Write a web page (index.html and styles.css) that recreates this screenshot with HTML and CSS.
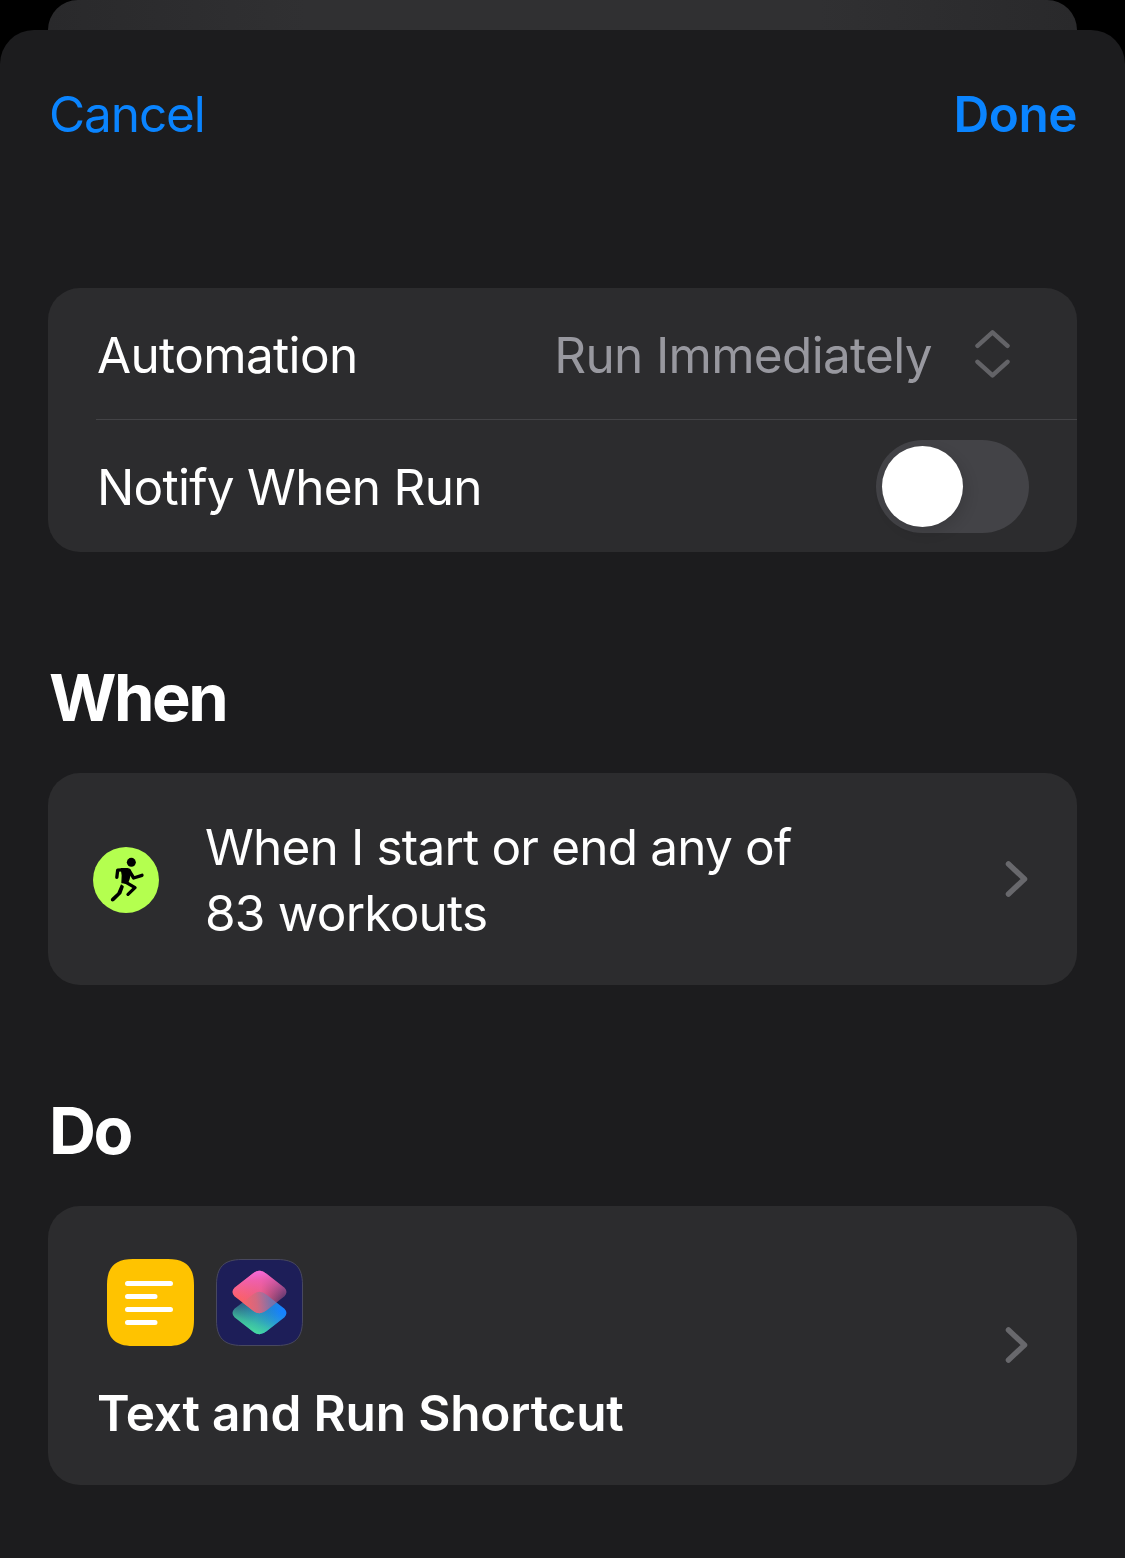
FILE: index.html
```html
<!DOCTYPE html>
<html lang="en">
<head>
<meta charset="utf-8">
<title>Automation</title>
<link rel="stylesheet" href="styles.css">
</head>
<body>
<div class="backdrop-sheet"></div>
<main class="sheet">
  <header class="toolbar">
    <a class="cancel">Cancel</a>
    <a class="done">Done</a>
  </header>

  <section class="card settings">
    <div class="row">
      <span class="label automation">Automation</span>
      <span class="value">Run Immediately</span>
      <svg class="updown" width="36" height="50" viewBox="0 0 36 50"><path d="M2.500 16.800 17.500 3.300 32.500 16.800M2.500 32.800 17.500 46.300 32.500 32.800"/></svg>
    </div>
    <div class="row divided">
      <span class="label notify">Notify When Run</span>
      <span class="switch"><span class="knob"></span></span>
    </div>
  </section>

  <h2 class="when">When</h2>
  <section class="card trigger">
    <svg class="workout" width="66" height="66" viewBox="39 36 198 198">
      <circle cx="138" cy="135" r="99" fill="#b4ff4f"/>
      <circle cx="154" cy="82" r="13.5"/>
      <path d="M124 101 142 101Q154 102 151 113L147 132 142 145 126 143 127 121Z" stroke="#000" stroke-width="4" stroke-linejoin="round"/>
      <path class="limb" d="M126 104.500 113 105.500 110.500 127M148 108 161 129 186 121M133 139 165 158 144 178"/>
      <path d="M123 148 131 153Q132 156 130 160L124 176 102 198Q97 201 93 197 91 193 95 189L112 173Z"/>
    </svg>
    <p class="description"><span class="line1">When I start or end any of</span><br><span class="line2">83 workouts</span></p>
    <svg class="chevron" width="24" height="38" viewBox="0 0 24 38"><path d="M3.500 4 19.500 19 3.500 34"/></svg>
  </section>

  <h2 class="do">Do</h2>
  <section class="card action">
    <div class="action-body">
      <div class="icons">
        <svg width="87" height="87" viewBox="0 0 87 87">
          <path fill="#ffc300" d="M0 26C0 8 8 0 26 0H61C79 0 87 8 87 26V61C87 79 79 87 61 87H26C8 87 0 79 0 61Z"/>
          <path d="M20.500 24.500H63.500M20.500 37.500H48M20.500 50.500H63.500M20.500 63.500H48" stroke="#fff" stroke-width="5" stroke-linecap="round"/>
        </svg>
        <svg width="87" height="87" viewBox="0 0 87 87">
          <defs>
            <linearGradient id="low" x1=".12" y1=".3" x2=".88" y2=".55">
              <stop offset="0" stop-color="#2c4a73"/><stop offset=".5" stop-color="#2687bd"/><stop offset="1" stop-color="#1682ff"/>
            </linearGradient>
            <linearGradient id="green" x1=".35" y1="1" x2=".65" y2=".35">
              <stop offset="0" stop-color="#4ce39a"/><stop offset=".35" stop-color="#42cfa0" stop-opacity=".75"/><stop offset="1" stop-color="#3399b5" stop-opacity="0"/>
            </linearGradient>
            <linearGradient id="top" x1=".1" y1=".5" x2=".95" y2=".5">
              <stop offset="0" stop-color="#ff6259"/><stop offset=".5" stop-color="#e95c80"/><stop offset="1" stop-color="#56366b"/>
            </linearGradient>
            <linearGradient id="pink" x1=".42" y1="0" x2=".5" y2=".75">
              <stop offset="0" stop-color="#f66be0"/><stop offset=".3" stop-color="#f060bd" stop-opacity=".75"/><stop offset="1" stop-color="#f060a0" stop-opacity="0"/>
            </linearGradient>
            <linearGradient id="overlap" x1="0" y1=".35" x2=".9" y2=".25">
              <stop offset=".2" stop-color="#f9646a"/><stop offset=".5" stop-color="#cf6a80"/><stop offset=".8" stop-color="#727ab5"/>
            </linearGradient>
            <path id="tile" d="M36.500 2.700 18.500 16.700Q14.600 21 18.500 25.300L36.500 39.300Q43.500 45.100 50.500 39.300L68.500 25.300Q72.400 21 68.500 16.700L50.500 2.700Q43.500-3.100 36.500 2.700Z"/>
            <clipPath id="upper"><use href="#tile" y="12"/></clipPath>
          </defs>
          <path fill="#1d1e58" stroke="#48485f" d="M.5 26C.5 8 8 .5 26 .5H61C79 .5 86.500 8 86.500 26V61C86.500 79 79 86.500 61 86.500H26C8 86.500 .5 79 .5 61Z"/>
          <use href="#tile" y="33" fill="url(#low)"/><use href="#tile" y="33" fill="url(#green)"/>
          <use href="#tile" y="12" fill="url(#top)"/><use href="#tile" y="12" fill="url(#pink)"/>
          <g clip-path="url(#upper)"><use href="#tile" y="33" fill="url(#overlap)" opacity=".85"/></g>
        </svg>
      </div>
      <span class="action-title">Text and Run Shortcut</span>
    </div>
    <svg class="chevron" width="24" height="38" viewBox="0 0 24 38"><path d="M3.500 4 19.500 19 3.500 34"/></svg>
  </section>
</main>
</body>
</html>
```
FILE: styles.css
```css
* { box-sizing: border-box; }

body {
  margin: 0;
  height: 1558px;
  overflow: hidden;
  background: #000;
  color: #fff;
  font: 400 49.5px/66px Inter, "Liberation Sans", sans-serif;
}

.backdrop-sheet {
  height: 30px;
  margin: 0 48px;
  border-radius: 30px 30px 0 0;
  background: linear-gradient(90deg, #29292b, #303032 25%, #303032 75%, #29292b);
}

.sheet {
  height: 1528px;
  padding: 0 48px;
  border-radius: 34px 34px 0 0;
  background: #1c1c1e;
}

.toolbar {
  display: flex;
  align-items: center;
  justify-content: space-between;
  height: 168px;
  margin-bottom: 90px;
  color: #0a84ff;
}

.cancel { padding-left: 1px; letter-spacing: -1.1px; }
.done { font-weight: 600; letter-spacing: -.5px; }

.card {
  display: flex;
  border-radius: 32px;
  background: #2c2c2e;
}

.settings { flex-direction: column; height: 264px; padding-left: 48px; }

.row {
  display: flex;
  align-items: center;
  height: 132px;
  padding-right: 48px;
}

.row:first-child { height: 131px; }
.row.divided { height: 133px; border-top: 1px solid #434346; }
.label, .value { padding-top: 2px; }
.label { margin-right: auto; padding-left: 1px; letter-spacing: -.65px; }
.notify { letter-spacing: -.73px; }
.value { color: #98989f; letter-spacing: -.68px; }

.updown { margin: 0 18px 0 43px; }

.updown path {
  fill: none;
  stroke: #636367;
  stroke-width: 4.500;
  stroke-linecap: round;
  stroke-linejoin: round;
}

.switch {
  width: 153px;
  height: 93px;
  padding: 6px;
  border-radius: 47px;
  background: #434347;
}

.knob {
  display: block;
  width: 81px;
  height: 81px;
  border-radius: 50%;
  background: #fff;
  box-shadow: 4px 5px 14px rgba(0, 0, 0, .12);
}

h2 {
  margin: 0;
  font-size: 65px;
  font-weight: 700;
  line-height: 80px;
  letter-spacing: -2.5px;
}

.when, .do { padding: 106px 0 35px 1px; }

.trigger { align-items: center; height: 212px; padding: 0 48px 0 45px; }
.workout { margin-top: 2px; }
.description { flex: 1; margin: 2px 0 0 46px; }
.line1 { letter-spacing: -.82px; }
.line2 { letter-spacing: -.75px; }

.limb {
  fill: none;
  stroke: #000;
  stroke-width: 10;
  stroke-linecap: round;
  stroke-linejoin: round;
}

.chevron path {
  fill: none;
  stroke: #68686c;
  stroke-width: 5.500;
  stroke-linecap: round;
  stroke-linejoin: round;
}

.action { align-items: center; height: 279px; padding: 0 48px; }
.action-body { display: flex; flex: 1; flex-direction: column; gap: 34px; padding-top: 14px; }
.icons { display: flex; gap: 22px; padding-left: 11px; }
.action-title { padding-left: 1px; font-weight: 600; letter-spacing: -.17px; }
.action .chevron { margin-bottom: 1px; }
```
